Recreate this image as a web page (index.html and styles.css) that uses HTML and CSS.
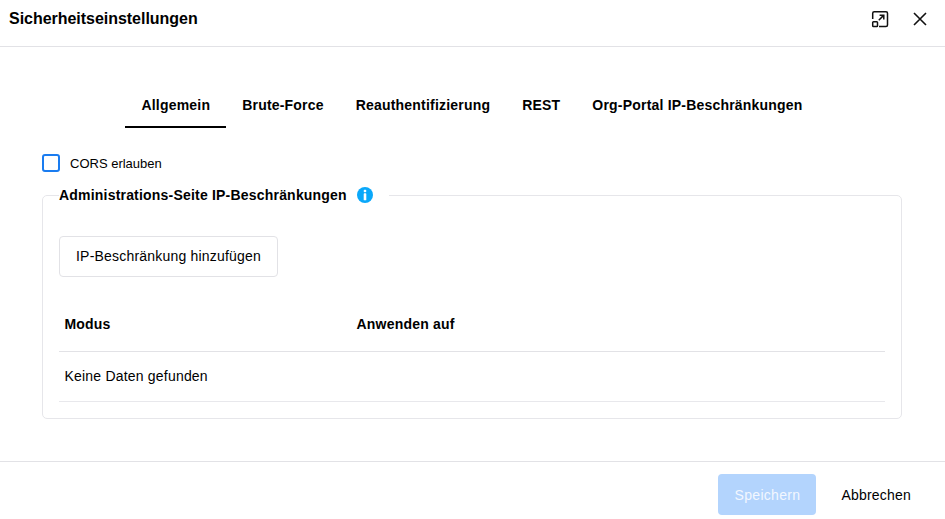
FILE: index.html
```html
<!DOCTYPE html>
<html lang="de">
<head>
    <meta charset="UTF-8">
    <meta name="viewport" content="width=device-width, initial-scale=1.0">
    <title>Sicherheitseinstellungen</title>
    <link rel="stylesheet" href="styles.css">
</head>
<body>
    <div class="dialog">
        <header class="dialog-header">
            <h1>Sicherheitseinstellungen</h1>
            <div class="header-actions">
                <button class="icon-btn" aria-label="Maximieren">
                    <svg width="18" height="18" viewBox="0 0 18 18" fill="none" stroke="#111" stroke-width="1.5">
                        <path d="M1.7 9V3.2A1.5 1.5 0 0 1 3.2 1.7H15a1.5 1.5 0 0 1 1.5 1.5V15a1.5 1.5 0 0 1-1.5 1.5H8"/>
                        <rect x="1.7" y="11.7" width="4.8" height="4.8" rx="0.8"/>
                        <path d="M7.8 10.2L12.6 5.4M8.6 5.2H12.8V9.4"/>
                    </svg>
                </button>
                <button class="icon-btn" aria-label="Schließen">
                    <svg width="14" height="14" viewBox="0 0 14 14" fill="none" stroke="#111" stroke-width="1.6">
                        <path d="M1 1L13 13M13 1L1 13"/>
                    </svg>
                </button>
            </div>
        </header>

        <main class="dialog-body">
            <nav class="tabs">
                <a class="tab active">Allgemein</a>
                <a class="tab">Brute-Force</a>
                <a class="tab">Reauthentifizierung</a>
                <a class="tab">REST</a>
                <a class="tab">Org-Portal IP-Beschränkungen</a>
            </nav>

            <label class="checkbox-row">
                <span class="checkbox"></span>
                <span>CORS erlauben</span>
            </label>

            <fieldset class="panel">
                <legend>
                    <span>Administrations-Seite IP-Beschränkungen</span>
                    <svg class="info-icon" width="16" height="16" viewBox="0 0 16 16">
                        <circle cx="8" cy="8" r="8" fill="#0aa8fa"/>
                        <rect x="6.7" y="2.8" width="2.6" height="2.4" rx="1" fill="#fff"/>
                        <rect x="6.7" y="6.3" width="2.6" height="7" rx="0.6" fill="#fff"/>
                    </svg>
                </legend>
                <button class="add-btn">IP-Beschränkung hinzufügen</button>
                <table class="data-table">
                    <thead>
                        <tr>
                            <th class="col-mode">Modus</th>
                            <th>Anwenden auf</th>
                        </tr>
                    </thead>
                    <tbody>
                        <tr>
                            <td colspan="2">Keine Daten gefunden</td>
                        </tr>
                    </tbody>
                </table>
            </fieldset>
        </main>

        <footer class="dialog-footer">
            <button class="save-btn" disabled>Speichern</button>
            <button class="cancel-btn">Abbrechen</button>
        </footer>
    </div>
</body>
</html>
```

FILE: styles.css
```css
* {
    margin: 0;
    padding: 0;
    box-sizing: border-box;
}

body {
    font-family: 'Liberation Sans', Arial, sans-serif;
    font-size: 14px;
    color: #000;
    background: white;
    overflow: hidden;
}

button {
    font-family: inherit;
    font-size: 14px;
    background: none;
    border: none;
    color: inherit;
}

.dialog {
    width: 945px;
    height: 519px;
}

.dialog-header {
    height: 47px;
    border-bottom: 1px solid #e2e2e6;
    padding: 0 18px 0 9px;
    display: flex;
    align-items: center;
    justify-content: space-between;
}

.dialog-header h1 {
    font-size: 16px;
    font-weight: bold;
    letter-spacing: -0.03px;
    margin-top: -9px;
}

.header-actions {
    display: flex;
    align-items: center;
    gap: 24px;
    margin-top: -9px;
}

.icon-btn {
    display: flex;
}

.dialog-body {
    height: 414px;
    padding: 37px 43px 0 42px;
}

.tabs {
    display: flex;
    justify-content: center;
    margin-bottom: 26px;
}

.tab {
    padding: 13px 16px 0;
    height: 44px;
    line-height: 16px;
    font-weight: bold;
    letter-spacing: 0.2px;
    border-bottom: 2px solid transparent;
}

.tab.active {
    border-bottom-color: #000;
}

.checkbox-row {
    display: flex;
    align-items: center;
    gap: 10px;
    font-size: 13px;
    height: 18px;
}

.checkbox {
    width: 18px;
    height: 18px;
    border: 2px solid #1a7cf0;
    border-radius: 3px;
}

.panel {
    border: 1px solid #e6e6ea;
    border-radius: 5px;
    padding: 33px 16px 16px;
    height: 232px;
    margin-top: 15px;
}

.panel legend {
    padding-right: 16px;
    font-weight: bold;
    letter-spacing: 0.2px;
    line-height: 16px;
    display: flex;
    align-items: center;
    gap: 10px;
}

.add-btn {
    display: block;
    width: 219px;
    height: 41px;
    padding-bottom: 2px;
    border: 1px solid #e2e2e6;
    border-radius: 4px;
    letter-spacing: 0.2px;
    margin-bottom: 22px;
}

.data-table {
    width: 100%;
    border-collapse: collapse;
}

.data-table th {
    text-align: left;
    height: 52px;
    padding: 0 5.5px 2px;
    letter-spacing: 0.2px;
    border-bottom: 1px solid #e2e2e6;
}

.col-mode {
    width: 292px;
}

.data-table td {
    height: 50px;
    padding: 0 5.5px;
    letter-spacing: 0.2px;
    border-bottom: 1px solid #e8e8ec;
}

.dialog-footer {
    height: 58px;
    border-top: 1px solid #e2e2e6;
    display: flex;
    justify-content: flex-end;
    align-items: flex-start;
    padding: 12px 34px 0 0;
    gap: 25px;
}

.save-btn {
    width: 98px;
    height: 41px;
    background: #b3d4fd;
    color: #f2f7ff;
    letter-spacing: 0.3px;
    border-radius: 4px;
}

.cancel-btn {
    height: 41px;
    letter-spacing: 0.2px;
}
```
